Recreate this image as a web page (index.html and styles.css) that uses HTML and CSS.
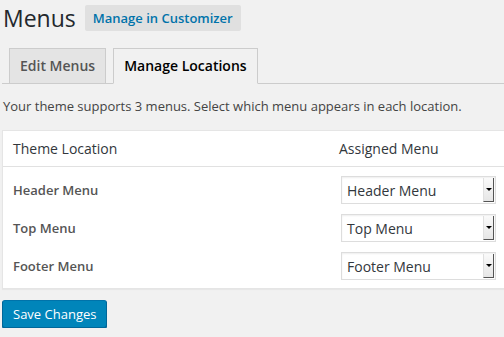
FILE: index.html
```html
<!DOCTYPE html>
<html lang="en">
<head>
  <meta charset="UTF-8" />
  <title>Menus</title>
  <link rel="stylesheet" href="styles.css">
</head>
<body>
  <div class="wrap">
    <div class="title-row">
      <h1>Menus</h1>
      <a class="title-action" href="#">Manage in Customizer</a>
    </div>

    <nav class="tabs">
      <a class="tab" href="#">Edit Menus</a>
      <a class="tab active" href="#">Manage Locations</a>
    </nav>

    <p class="intro">Your theme supports 3 menus. Select which menu appears in each location.</p>

    <div class="locations">
      <div class="loc-head">
        <span>Theme Location</span>
        <span class="col-menu">Assigned Menu</span>
      </div>
      <div class="loc-body">
        <div class="loc-row">
          <label>Header Menu</label>
          <div class="select"><span>Header Menu</span><i class="arrow"></i></div>
        </div>
        <div class="loc-row">
          <label>Top Menu</label>
          <div class="select"><span>Top Menu</span><i class="arrow"></i></div>
        </div>
        <div class="loc-row">
          <label>Footer Menu</label>
          <div class="select"><span>Footer Menu</span><i class="arrow"></i></div>
        </div>
      </div>
    </div>

    <button class="btn-primary">Save Changes</button>
  </div>
</body>
</html>
```

FILE: styles.css
```css
html, body {
  overflow: hidden;
}

body {
  margin: 0;
  background: #f1f1f1;
  color: #444;
  font-family: 'Open Sans', sans-serif;
  font-size: 13px;
}

.wrap {
  width: 520px;
  padding: 5px 0 0 2px;
}

.title-row {
  display: flex;
  align-items: center;
  gap: 9px;
}

h1 {
  margin: 0 0 0 1px;
  font-size: 23px;
  font-weight: 400;
  line-height: 26px;
  color: #23282d;
}

.title-action {
  display: block;
  height: 26px;
  line-height: 26px;
  padding: 0 8px;
  background: #e0e0e0;
  border-radius: 2px;
  color: #0073aa;
  font-weight: 600;
  text-decoration: none;
}

.tabs {
  display: flex;
  gap: 7px;
  margin-top: 17px;
  padding-left: 7px;
  border-bottom: 1px solid #ccc;
}

.tab {
  height: 34px;
  line-height: 34px;
  padding: 0 10px;
  margin-bottom: -1px;
  background: #e4e4e4;
  border: 1px solid #ccc;
  border-bottom: none;
  color: #555;
  font-size: 14px;
  font-weight: 600;
  text-decoration: none;
}

.tab.active {
  background: #f1f1f1;
  border-bottom: 1px solid #f1f1f1;
  height: 34px;
  color: #000;
}

.intro {
  margin: 12px 0 0 1px;
  line-height: 20px;
  color: #444;
}

.locations {
  margin-top: 14px;
  background: #fff;
  border: 1px solid #e5e5e5;
  box-shadow: 0 1px 1px rgba(0, 0, 0, 0.04);
}

.loc-head {
  display: grid;
  grid-template-columns: 326px 1fr;
  height: 35px;
  align-items: center;
  padding-left: 10px;
  border-bottom: 1px solid #e1e1e1;
  color: #32373c;
  font-size: 14px;
}

.loc-body {
  display: flex;
  flex-direction: column;
  gap: 10px;
  padding: 9px 0 8px;
}

.loc-row {
  display: grid;
  grid-template-columns: 328px 155px;
  align-items: center;
  padding-left: 10px;
}

.loc-row label {
  color: #555;
  font-weight: 600;
}

.select {
  display: flex;
  align-items: center;
  justify-content: space-between;
  height: 28px;
  box-sizing: border-box;
  border: 1px solid #ddd;
  box-shadow: inset 0 1px 2px rgba(0, 0, 0, 0.07);
  padding-left: 5px;
  color: #32373c;
  font-size: 14px;
}

.arrow {
  position: relative;
  width: 11px;
  height: 24px;
  margin-right: 1px;
  box-sizing: border-box;
  background: linear-gradient(#fafafa, #e6e6e6);
  border-right: 1px solid #555;
  border-bottom: 1px solid #555;
  border-left: 1px solid #e0e0e0;
}

.arrow::after {
  content: "";
  position: absolute;
  left: 2px;
  top: 10px;
  border-left: 3px solid transparent;
  border-right: 3px solid transparent;
  border-top: 3px solid #000;
}

.btn-primary {
  display: block;
  margin-top: 11px;
  height: 28px;
  padding: 0 10px;
  background: #0085ba;
  border: 1px solid #0073aa;
  border-color: #0073aa #006799 #006799;
  border-radius: 3px;
  box-shadow: 0 1px 0 #006799;
  color: #fff;
  font-family: 'Open Sans', sans-serif;
  font-size: 13px;
  cursor: pointer;
}
```
